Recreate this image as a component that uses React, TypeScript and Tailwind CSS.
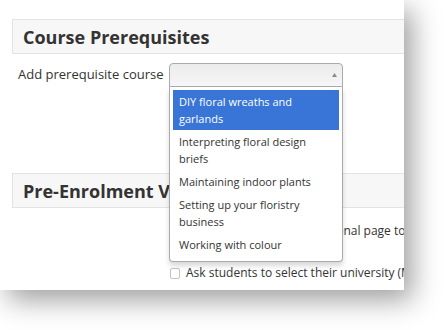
import React from "react";

const courses = [
  { label: "DIY floral wreaths and garlands", active: true },
  { label: "Interpreting floral design briefs" },
  { label: "Maintaining indoor plants" },
  { label: "Setting up your floristry business" },
  { label: "Working with colour" },
];

function SectionHeader({ title }: { title: string }) {
  return (
    <div className="ml-3 w-[420px] h-[35px] bg-[#f7f7f7] border border-[#e3e3e3] flex items-center pl-[10px]">
      <h2 className="text-[18px] font-bold text-[#333] leading-none">{title}</h2>
    </div>
  );
}

function CheckRow({ text }: { text: string }) {
  return (
    <div className="flex items-center gap-[6px] pl-[170px] h-[18px]">
      <span className="w-[10px] h-[11px] border border-[#c4c4c4] rounded-[2px] bg-white shrink-0" />
      <span className="whitespace-nowrap text-[12px] text-[#333]">{text}</span>
    </div>
  );
}

export default function App() {
  return (
    <div
      className="w-[444px] h-[330px] bg-white overflow-hidden"
      style={{ fontFamily: '"Open Sans", "Liberation Sans", sans-serif' }}
    >
      <div className="relative w-[404px] h-[290px] bg-white shadow-[8px_10px_26px_rgba(0,0,0,0.38)] overflow-hidden pt-[19px]">
        <SectionHeader title="Course Prerequisites" />

        <div className="flex items-center mt-[9px] h-[24px]">
          <label className="w-[169px] pl-[18px] text-[13px] text-[#333] whitespace-nowrap">
            Add prerequisite course
          </label>
          <div className="relative w-[174px] h-[24px]">
            <div className="w-full h-full border border-[#aaa] rounded-t-[4px] bg-gradient-to-b from-[#ececec] to-[#f6f6f6] flex items-center justify-end pr-[5px]">
              <svg width="5" height="4" viewBox="0 0 5 4" className="mb-[1px]">
                <path d="M2.5 0 L5 4 L0 4 Z" fill="#8a8a8a" />
              </svg>
            </div>
            <div className="absolute z-10 left-0 top-[24px] w-full bg-white border border-t-0 border-[#aaa] rounded-b-[4px] shadow-[0_4px_5px_rgba(0,0,0,0.15)] pt-[3px] pb-[5px] px-[3px]">
              <ul className="text-[11px] leading-[17px]">
                {courses.map((c) => (
                  <li
                    key={c.label}
                    className={
                      c.active
                        ? "bg-[#3875d7] text-white px-[6px] py-[3px]"
                        : "text-[#333] px-[6px] py-[3px]"
                    }
                  >
                    {c.label}
                  </li>
                ))}
              </ul>
            </div>
          </div>
        </div>

        <div className="mt-[86px]">
          <SectionHeader title="Pre-Enrolment Verification" />
        </div>

        <div className="mt-[14px] flex flex-col gap-[24px]">
          <CheckRow text="Show all students an additional page to collect details" />
          <CheckRow text="Ask students to select their university (Moodle)" />
        </div>
      </div>
    </div>
  );
}
